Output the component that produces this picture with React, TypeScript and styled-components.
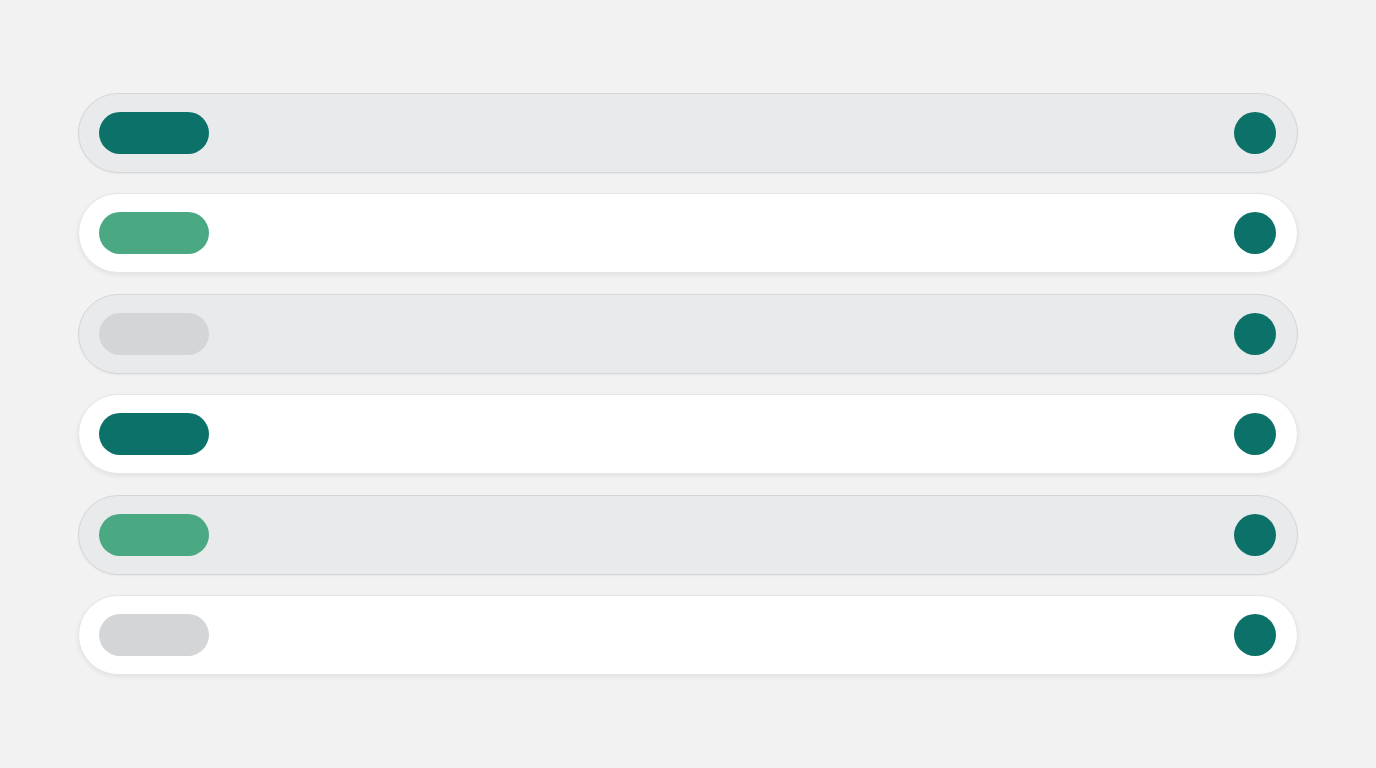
import styled, {createGlobalStyle} from 'styled-components'

const GlobalStyle = createGlobalStyle`
  html, body {
    margin: 0;
    padding: 0;
    background: #f2f2f2;
    font-family: "Liberation Sans", Arial, sans-serif;
  }
`

type Tone = 'teal' | 'green' | 'gray'
type Variant = 'muted' | 'plain'

const rows: {variant: Variant; tone: Tone}[] = [
  {variant: 'muted', tone: 'teal'},
  {variant: 'plain', tone: 'green'},
  {variant: 'muted', tone: 'gray'},
  {variant: 'plain', tone: 'teal'},
  {variant: 'muted', tone: 'green'},
  {variant: 'plain', tone: 'gray'},
]

const toneColors: Record<Tone, string> = {
  teal: '#0b7169',
  green: '#4aa882',
  gray: '#d4d5d7',
}

const Page = styled.div`
  width: 1376px;
  height: 768px;
  box-sizing: border-box;
  padding: 93px 78px 0 78px;
  display: flex;
  flex-direction: column;
  gap: 20.4px;
`

const Row = styled.div<{$variant: Variant}>`
  height: 80px;
  flex-shrink: 0;
  box-sizing: border-box;
  border-radius: 40px;
  padding: 0 21px 0 20px;
  display: flex;
  align-items: center;
  justify-content: space-between;
  background: ${({$variant}) => ($variant === 'muted' ? '#e9eaeb' : '#ffffff')};
  border: 1px solid ${({$variant}) => ($variant === 'muted' ? '#d5d6d8' : '#e6e6e6')};
  box-shadow: ${({$variant}) =>
    $variant === 'muted'
      ? '0 1px 2px rgba(0, 0, 0, 0.05)'
      : '0 2px 5px rgba(0, 0, 0, 0.07)'};
`

const Pill = styled.div<{$tone: Tone}>`
  width: 110px;
  height: 42px;
  border-radius: 21px;
  background: ${({$tone}) => toneColors[$tone]};
`

const Dot = styled.div`
  width: 42px;
  height: 42px;
  border-radius: 50%;
  background: #0b7169;
`

const App = () => {
  return (
    <>
      <GlobalStyle />
      <Page>
        {rows.map((row, i) => (
          <Row key={i} $variant={row.variant}>
            <Pill $tone={row.tone} />
            <Dot />
          </Row>
        ))}
      </Page>
    </>
  )
}

export default App
